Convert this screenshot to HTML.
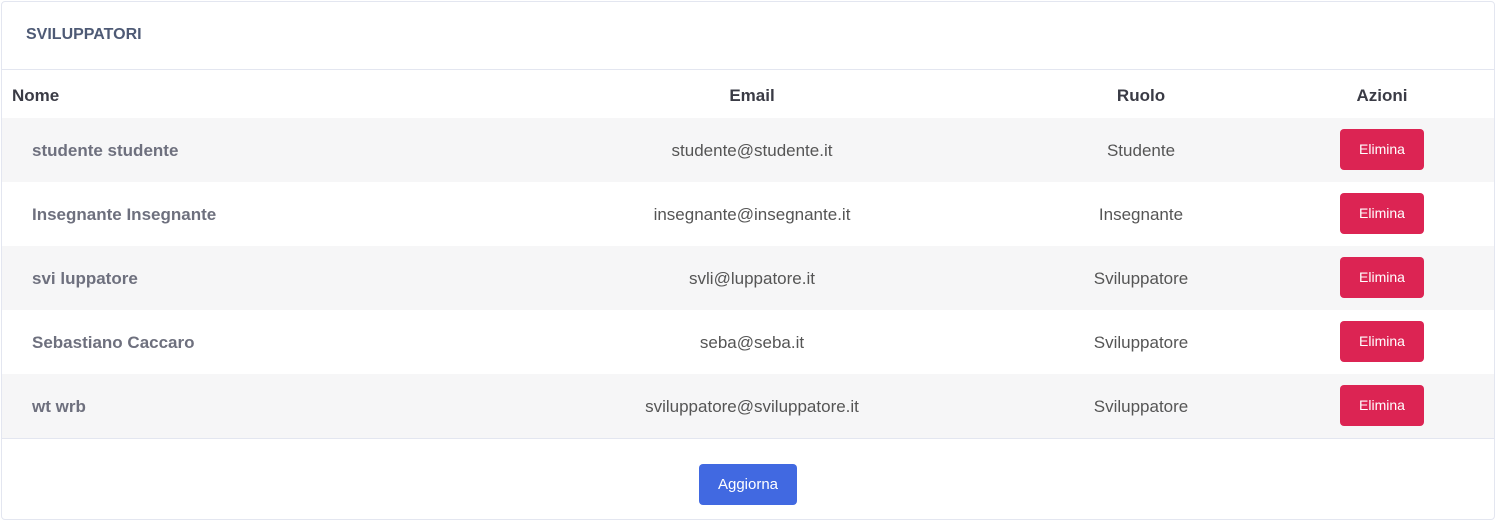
<!DOCTYPE html>
<html><head><style>
body{margin:0;width:1496px;height:521px;background:#fff;font-family:"Liberation Sans",sans-serif;position:relative;overflow:hidden}
.card{position:absolute;left:1px;top:1px;width:1494px;height:519px;border:1px solid #e3e6f0;border-radius:4px;box-sizing:border-box}
.t{position:absolute;white-space:nowrap}
.c{transform:translateX(-50%)}
.row{position:absolute;left:2px;width:1492px;height:64px}
.btn{position:absolute;left:1340px;width:84px;height:41px;background:#dc2453;border-radius:4px;color:#fff;font-size:14px;text-align:center;line-height:41px}
</style></head><body>
<div class="card"></div>
<div class="t" style="left:26px;top:26px;font-size:16px;font-weight:bold;color:#4e5a75">SVILUPPATORI</div>
<div style="position:absolute;left:2px;top:69px;width:1492px;height:1px;background:#e3e6f0"></div>
<div class="t" style="left:12px;top:86px;font-size:17px;font-weight:bold;color:#3a3b45">Nome</div>
<div class="t c" style="left:752px;top:86px;font-size:17px;font-weight:bold;color:#3a3b45">Email</div>
<div class="t c" style="left:1141px;top:86px;font-size:17px;font-weight:bold;color:#3a3b45">Ruolo</div>
<div class="t c" style="left:1382px;top:86px;font-size:17px;font-weight:bold;color:#3a3b45">Azioni</div>

<div class="row" style="top:118px;background:#f6f6f7"></div>
<div class="row" style="top:246px;background:#f6f6f7"></div>
<div class="row" style="top:374px;background:#f6f6f7"></div>
<div style="position:absolute;left:2px;top:438px;width:1492px;height:1px;background:#e3e6f0"></div>

<div class="t" style="left:32px;top:141px;font-size:17px;font-weight:bold;color:#6e707e">studente studente</div>
<div class="t c" style="left:752px;top:141px;font-size:17px;color:#555">studente@studente.it</div>
<div class="t c" style="left:1141px;top:141px;font-size:17px;color:#555">Studente</div>
<div class="btn" style="top:129px">Elimina</div>

<div class="t" style="left:32px;top:205px;font-size:17px;font-weight:bold;color:#6e707e">Insegnante Insegnante</div>
<div class="t c" style="left:752px;top:205px;font-size:17px;color:#555">insegnante@insegnante.it</div>
<div class="t c" style="left:1141px;top:205px;font-size:17px;color:#555">Insegnante</div>
<div class="btn" style="top:193px">Elimina</div>

<div class="t" style="left:32px;top:269px;font-size:17px;font-weight:bold;color:#6e707e">svi luppatore</div>
<div class="t c" style="left:752px;top:269px;font-size:17px;color:#555">svli@luppatore.it</div>
<div class="t c" style="left:1141px;top:269px;font-size:17px;color:#555">Sviluppatore</div>
<div class="btn" style="top:257px">Elimina</div>

<div class="t" style="left:32px;top:333px;font-size:17px;font-weight:bold;color:#6e707e">Sebastiano Caccaro</div>
<div class="t c" style="left:752px;top:333px;font-size:17px;color:#555">seba@seba.it</div>
<div class="t c" style="left:1141px;top:333px;font-size:17px;color:#555">Sviluppatore</div>
<div class="btn" style="top:321px">Elimina</div>

<div class="t" style="left:32px;top:397px;font-size:17px;font-weight:bold;color:#6e707e">wt wrb</div>
<div class="t c" style="left:752px;top:397px;font-size:17px;color:#555">sviluppatore@sviluppatore.it</div>
<div class="t c" style="left:1141px;top:397px;font-size:17px;color:#555">Sviluppatore</div>
<div class="btn" style="top:385px">Elimina</div>

<div style="position:absolute;left:699px;top:464px;width:98px;height:41px;background:#4169e1;border-radius:4px;color:#fff;font-size:15px;text-align:center;line-height:41px">Aggiorna</div>
</body></html>
